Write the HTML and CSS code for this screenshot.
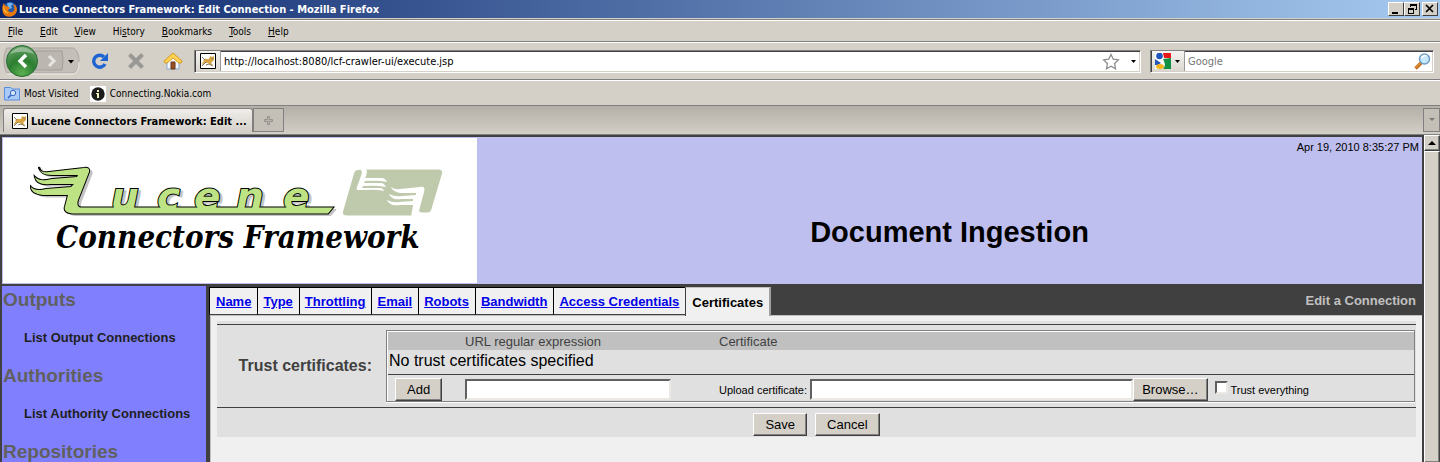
FILE: index.html
```html
<!DOCTYPE html>
<html lang="en">
<head>
<meta charset="utf-8">
<title>Lucene Connectors Framework: Edit Connection</title>
<link rel="stylesheet" href="styles.css">
</head>
<body>
<div class="window">
  <header class="titlebar">
    <svg class="icon16" viewBox="0 0 16 16" aria-hidden="true"><circle cx="8" cy="8" r="7" fill="#2458a8"/><path d="M5 3c2-2 5-1 6 0l-2 2 1 2-3 1z" fill="#6bb6ee"/><path d="M2 2c0 2 1 3 3 3l3 2-2 2c1 3 5 3 6 0 1-2 0-4-1-6 4 1 5 6 3 9-3 5-11 5-13 0C0 8 0 5 2 2z" fill="#e8780c"/><path d="M2 4c0 4 1 7 5 8-4 1-7-3-5-8z" fill="#ffc83c"/></svg>
    <span class="window-title">Lucene Connectors Framework: Edit Connection - Mozilla Firefox</span>
    <div class="window-buttons">
      <button class="win-btn" aria-label="Minimize"><svg viewBox="0 0 12 10"><path d="M2 8h6v2H2z"/></svg></button>
      <button class="win-btn" aria-label="Restore"><svg viewBox="0 0 12 10" shape-rendering="crispEdges"><path d="M4 0h7v6H9V5h1V2H5v1H4zM2 4h6v6H2zm1 2v3h4V6z" fill-rule="evenodd"/></svg></button>
      <button class="win-btn win-close" aria-label="Close"><svg viewBox="0 0 12 10"><path d="M2 1l7 7M9 1L2 8" stroke="#000" stroke-width="1.7"/></svg></button>
    </div>
  </header>
  <nav class="menubar">
    <button><u>F</u>ile</button><button><u>E</u>dit</button><button><u>V</u>iew</button><button>Hi<u>s</u>tory</button><button><u>B</u>ookmarks</button><button><u>T</u>ools</button><button><u>H</u>elp</button>
  </nav>
  <div class="navbar">
    <button class="plain history" aria-label="Back and forward">
      <svg width="78" height="34" viewBox="0 0 78 34">
        <defs><radialGradient id="back" cx=".5" cy=".9" r=".8"><stop offset="0" stop-color="#5cb050"/><stop offset=".55" stop-color="#2b7e30"/><stop offset="1" stop-color="#5f9c60"/></radialGradient></defs>
        <path d="M5 4h66c8 3 8 22 0 25H5C1 24 1 9 5 4z" fill="#c4c0b9" stroke="#aaa69f"/>
        <path d="M5 30h66c4-1 6-5 6-12" fill="none" stroke="#f1eee8"/>
        <path d="M33 7h27q2 9 0 19H33z" fill="#bbb7b0" stroke="#a19d97"/>
        <circle cx="20" cy="17" r="15.500" fill="url(#back)" stroke="#2a6c33"/>
        <path d="M8 10c6-9 18-9 24 0-8-3-16-3-24 0z" fill="#fff" opacity=".35"/>
        <path d="M24 11l-6 6 6 6" fill="none" stroke="#fff" stroke-width="3.500"/>
        <path d="M47 12l5 5-5 5" fill="none" stroke="#e6e4df" stroke-width="3"/>
        <path d="M66 16h6l-3 3.500z"/>
      </svg>
    </button>
    <button class="plain" aria-label="Reload"><svg width="18" height="18" viewBox="0 0 18 18"><path d="M14 12a6 6 0 1 1-1-7" fill="none" stroke="#1e63d2" stroke-width="3.400"/><path d="M17 1v8H9z" fill="#1e63d2"/></svg></button>
    <button class="plain" aria-label="Stop"><svg width="18" height="18" viewBox="0 0 18 18"><path d="M2.500 2.500l13 13m0-13l-13 13" stroke="#9a9894" stroke-width="4"/></svg></button>
    <button class="plain" aria-label="Home"><svg width="20" height="18" viewBox="0 0 20 18"><path d="M4 8v9h12V8l-6-5z" fill="#f3f7fc" stroke="#8ca8cc"/><path d="M8 10h4v7H8z" fill="#985126" stroke="#693617"/><path d="M10 1L1 9l1 2h2l6-5 6 5h2l1-2z" fill="#ffd254" stroke="#d6971b"/></svg></button>
    <div class="field location">
      <span class="site-icon"><svg class="icon16" viewBox="0 0 16 16"><use href="#cat"/></svg></span>
      <input aria-label="Address" value="http://localhost:8080/lcf-crawler-ui/execute.jsp">
      <button class="plain" aria-label="Bookmark this page"><svg width="18" height="17" viewBox="0 0 18 17"><path d="M9 1.500l2.300 4.700 5 .7-3.700 3.600.9 5.200L9 13.300l-4.500 2.400.9-5.200L1.700 6.900l5-.7z" fill="#fff" stroke="#8c8c8c" stroke-width="1.300"/></svg></button>
      <button class="plain drop" aria-label="Show history"><svg width="5" height="3" viewBox="0 0 5 3"><path d="M0 0h5L2.500 3z"/></svg></button>
    </div>
    <div class="field search">
      <button class="engine" aria-label="Choose search engine"><svg class="icon16" viewBox="0 0 16 16"><path d="M0 0h16v16H0z" fill="#fff"/><path d="M8 0h8v5H9z" fill="#e81818"/><path d="M8 6l8-1v11H8c3-3 2-6 0-10z" fill="#109040"/><path d="M0 6l6 4-3 2H0z" fill="#2456b8"/><circle cx="4.500" cy="3" r="3.300" fill="#1c56bc"/><ellipse cx="5" cy="13.500" rx="4" ry="2.500" fill="#f5b418"/></svg><svg width="5" height="3" viewBox="0 0 5 3"><path d="M0 0h5L2.500 3z"/></svg></button>
      <input aria-label="Search" placeholder="Google">
      <button class="plain" aria-label="Go"><svg width="17" height="17" viewBox="0 0 17 17"><path d="M1.500 15.500l6-6" stroke="#c06a18" stroke-width="3.400"/><path d="M1.500 15l5-5" stroke="#f4ad50"/><circle cx="10.500" cy="6" r="5" fill="#c7e8fc" stroke="#709cc4" stroke-width="1.500"/><path d="M7.500 5c1-2.500 4-3 5-2" stroke="#fff" stroke-width="1.500" fill="none"/></svg></button>
    </div>
  </div>
  <nav class="bookmarks">
    <a href="#"><svg class="icon16" viewBox="0 0 16 16"><path d="M.5 1.500h6l2 1.500h7v11H.5z" fill="#a9c9f7" stroke="#5c8cdc"/><circle cx="9" cy="7" r="2.700" fill="#d3e5fe" stroke="#3868c0"/><path d="M7 9L4 12" stroke="#3868c0" stroke-width="1.700"/></svg>Most Visited</a>
    <a href="#"><svg class="icon16" viewBox="0 0 16 16"><path d="M0 0h16v16H0z" fill="#fff"/><circle cx="8" cy="8" r="6.700" fill="#1b1b1b"/><path d="M7 4h2v2H7zm-1 3h3v5H7V8H6z" fill="#efefbf"/></svg>Connecting.Nokia.com</a>
  </nav>
  <div class="tabstrip">
    <button class="browser-tab"><svg class="icon16" viewBox="0 0 16 16"><g id="cat"><path d="M.5.5h15v15H.5z" fill="#fff" stroke="#000"/><path d="M3 7c2-2 4-1 6-1l1-3 2 1 2-1v4l-2 2-1 1 2 2h-3l-2-2-3 0-3 2c0-2 1-3 2-4z" fill="#d9a443"/><path d="M2 4l3 3m-3 6l4-4m0 3l3-1 4 2M11 5l2 1" stroke="#857a68" fill="none"/></g></svg><span>Lucene Connectors Framework: Edit ...</span></button>
    <button class="new-tab" aria-label="New tab"><svg width="9" height="9" viewBox="0 0 9 9"><path d="M3.500.5h2v3h3v2h-3v3h-2v-3h-3v-2h3z" fill="#b4b1ab" stroke="#96938e"/></svg></button>
    <button class="all-tabs" aria-label="List all tabs"><svg width="6" height="4" viewBox="0 0 6 4"><path d="M0 0h6L3 3z" fill="#777"/></svg></button>
  </div>
  <div class="viewport">
    <div class="page">
      <div class="banner">
        <div class="logo">
          <svg width="474" height="145" viewBox="3 138 474 145" role="img" aria-label="Lucene Connectors Framework">
            <defs>
              <g id="wordmark">
                <path d="M39 168c2 4 4 5 10 4l35-4q6-1 5 4L78 200q-2 7 3 7.500H333l-5 6H72q-9-1-7-7L68 195H43c-8-1-12-4-12-8 3 3 7 4 15 2l25-2 3-3H50c-9 1-14-2-15-7 4 4 8 4 17 2l25-2 1-2H52c-9 0-12-3-13-8z"/>
                <g class="script"><text y="210"><tspan x="111">u</tspan><tspan x="157">c</tspan><tspan x="194">e</tspan><tspan x="236">n</tspan><tspan x="283">e</tspan></text></g>
              </g>
            </defs>
            <use href="#wordmark" x="3" y="2" fill="#c4c4c4" stroke="#c4c4c4"/>
            <use href="#wordmark" fill="#000" stroke="#000" stroke-width="2"/>
            <use href="#wordmark" fill="#bde384"/>
            <path d="M356 170.500q4-1 6-1h76q5 0 4 4l-11 37q-1 2-3 2h-9l-8 3H347q-5 0-4-4l11-38q1-3 2-3z" fill="#bfcaad"/>
            <g fill="#fff"><path d="M358 168h8q2 5-1 10h17q3 0 5 4-9-2-22-1l-1 2h17q3 0 5 4-9-2-23-1l-1 2h18q3 0 4 3-8-2-17-1H357q-1-1 0-3l5-14q-1-4-4-6z"/><path d="M391 187q4 3 9 2l20-2q6-1 4 5l-5 19q1 2 4 2l-2 4h-10l2-12h-13c-8 1-11-1-13-5q6 3 12 2l14-1v-2h-12c-7 1-10-1-12-5q6 3 13 2l14-1v-2h-13c-6 0-10-2-12-6z"/></g>
            <text class="logo-caption" x="56" y="248">Connectors Framework</text>
          </svg>
        </div>
        <div class="banner-main">
          <time class="clock">Apr 19, 2010 8:35:27 PM</time>
          <h1>Document Ingestion</h1>
        </div>
      </div>
      <div class="body">
        <nav class="sidebar">
          <h2>Outputs</h2><a href="#">List Output Connections</a>
          <h2>Authorities</h2><a href="#">List Authority Connections</a>
          <h2>Repositories</h2>
        </nav>
        <main class="content">
          <div class="page-tabs">
            <a href="#">Name</a><a href="#">Type</a><a href="#">Throttling</a><a href="#">Email</a><a href="#">Robots</a><a href="#">Bandwidth</a><a href="#">Access Credentials</a><span class="current">Certificates</span>
            <strong class="caption">Edit a Connection</strong>
          </div>
          <form class="panel">
            <div class="sheet">
              <div class="setting">
                <strong class="setting-label">Trust certificates:</strong>
                <table class="certs">
                  <thead><tr><th class="col-action"></th><th class="col-url">URL regular expression</th><th>Certificate</th></tr></thead>
                  <tbody>
                    <tr><td colspan="3" class="empty">No trust certificates specified</td></tr>
                    <tr class="entry">
                      <td class="add"><button type="button" class="btn">Add</button></td>
                      <td><input class="text regexp" aria-label="URL regular expression"></td>
                      <td><div class="upload"><label for="cert">Upload certificate:</label><input class="text" id="cert"><button type="button" class="btn">Browse…</button><label class="trust"><input type="checkbox">Trust everything</label></div></td>
                    </tr>
                  </tbody>
                </table>
              </div>
              <div class="actions"><button type="button" class="btn">Save</button><button type="button" class="btn">Cancel</button></div>
            </div>
          </form>
        </main>
      </div>
    </div>
    <div class="scrollbar"><button aria-label="Scroll up"><svg width="8" height="4" viewBox="0 0 8 4"><path d="M0 4h8L4 0z"/></svg></button><div class="thumb"></div></div>
  </div>
</div>
</body>
</html>
```
FILE: styles.css
```css
* { box-sizing: border-box; }
body { margin: 0; font: 13px "Liberation Sans", Arial, sans-serif; color: #000; overflow: hidden; }
button, input { font: inherit; color: inherit; margin: 0; }
button { padding: 0; border: 0; background: none; }
svg { display: block; flex: none; }
.icon16 { width: 16px; height: 16px; }
.window { display: flex; flex-direction: column; height: 100vh; background: #d4d0c8; }

.titlebar, .menubar, .navbar, .bookmarks, .tabstrip { display: flex; align-items: center; flex: none; font-family: "DejaVu Sans Condensed", "DejaVu Sans", sans-serif; font-size: 11px; }
.titlebar { height: 18px; padding: 0 2px; background: linear-gradient(90deg, #0a246a, #a6caf0); color: #fff; }
.window-title { flex: 1; padding-left: 1px; font-weight: bold; white-space: nowrap; }
.window-buttons { display: flex; }
.win-btn { width: 16px; height: 14px; padding: 1px; background: #d4d0c8; border: 1px solid; border-color: #fff #404040 #404040 #fff; }
.win-btn svg { width: 12px; height: 10px; }
.win-close { margin-left: 2px; }

.menubar { height: 23px; margin-top: 1px; padding: 1px 8px 0; gap: 17px; border-top: 1px solid #808080; border-bottom: 1px solid #808080; box-shadow: inset 0 1px #fff; font-size: 10px; }
.navbar { height: 38px; padding: 0 6px 0 2px; border-top: 1px solid #fff; border-bottom: 1px solid #808080; }
.history { margin-right: 11px; }
.navbar > .plain + .plain { margin-right: 18px; }
.field { display: flex; align-items: center; height: 23px; background: #fff; border: 1px solid; border-color: #808080 #fff #fff #808080; box-shadow: inset 1px 1px #404040, inset -1px -1px #d4d0c8; }
.field input { flex: 1; min-width: 0; border: 0; background: none; outline: 0; padding: 0 3px; }
.field input::placeholder { color: #777; opacity: 1; }
.location { flex: 1; margin-right: 9px; padding-right: 4px; margin-left: -7px; }
.site-icon { padding: 2px 4px; background: linear-gradient(#f5f4f1, #dad7d0); border-right: 1px solid #999; margin: 1px 0 1px 1px; }
.drop { margin-left: 11px; }
.search { width: 284px; padding-right: 2px; }
.engine { display: flex; align-items: center; gap: 4px; height: 20px; padding: 0 4px 0 3px; margin-left: 1px; background: linear-gradient(#f5f4f1, #dad7d0); border-right: 1px solid #999; }

.bookmarks { height: 25px; padding: 1px 4px 0; gap: 11px; border-top: 1px solid #fff; font-size: 10px; }
.bookmarks a { display: flex; align-items: center; gap: 4px; color: #000; text-decoration: none; }
.tabstrip { align-items: flex-end; height: 30px; padding: 3px 0 2px 3px; border-top: 1px solid #808080; background: linear-gradient(#b4b0a8, #ccc8c0 80%, #d4d0c8); border-bottom: 1px solid #808080; }
.browser-tab, .new-tab, .all-tabs { display: flex; align-items: center; height: 24px; border: 1px solid #808080; border-bottom: 0; }
.browser-tab { width: 250px; gap: 3px; padding: 1px 0 0 8px; background: linear-gradient(#f0eeeb, #d4d0c8); border-radius: 3px 3px 0 0; font-weight: bold; font-size: 11px; white-space: nowrap; }
.new-tab, .all-tabs { justify-content: center; width: 31px; background: #c4c0b8; border-bottom: 1px solid #808080; }
.all-tabs { width: 17px; margin-left: auto; }

.viewport { display: flex; flex: 1; min-height: 0; }
.page { display: flex; flex-direction: column; flex: 1; min-width: 0; padding: 2px 2px 0; background: #404040; }
.banner { display: flex; flex: none; background: #bfbfef; padding: 1px 0 1px 1px; }
.logo { flex: none; background: #fff; }
.script { font: italic bold 39px "DejaVu Sans", sans-serif; }
.logo-caption { font: italic bold 31px "DejaVu Serif Condensed", "DejaVu Serif", serif; }
.banner-main { display: flex; flex: 1; flex-direction: column; }
.clock { align-self: flex-end; padding: 3px 3px 0 0; font-size: 11px; }
h1 { margin: auto 0 34px; font-size: 29px; line-height: 34px; text-align: center; }
.body { display: flex; flex: 1; min-height: 0; padding-top: 2px; overflow: hidden; }
.sidebar { flex: none; width: 204px; background: #8080ff; overflow: hidden; }
.sidebar h2 { margin: 0; padding: 2px 1px 0; color: #606060; font-size: 19px; line-height: 23px; }
.sidebar a { display: block; padding: 19px 22px 17px; color: #202020; font-weight: bold; line-height: 15px; text-decoration: none; white-space: nowrap; }
.content { display: flex; flex: 1; flex-direction: column; min-width: 0; padding-left: 3px; }
.page-tabs { display: flex; flex: none; padding-top: 1px; height: 29px; font-weight: bold; line-height: 27px; }
.page-tabs a, .current { padding: 0 6px; background: #f0f0f0; border: 1px solid #000; border-right-width: 0; border-bottom-color: #404040; white-space: nowrap; }
.page-tabs a { color: #0000e8; }
.page-tabs a:not(:first-child) { padding: 0 6px 0 5px; }
.current { position: relative; z-index: 1; height: 29px; border: 1px solid #c0c0c0; border-left-color: #404040; border-right: 2px solid #a0a0a0; border-bottom: 0; line-height: 29px; }
.caption { margin-left: auto; padding-right: 6px; color: #c0c0c0; }
.panel { flex: 1; padding: 5px 6px; margin-left: 1px; background: #f0f0f0; border-top: 1px solid #c0c0c0; border-left: 1px solid #c0c0c0; }
.sheet { padding-top: 3px; background: #e0e0e0; }
.setting { display: flex; align-items: center; padding: 5px 1px 5px 0; border-top: 1px solid #404040; }
.setting-label { flex: none; width: 169px; padding-right: 14px; color: #404040; font-size: 16px; text-align: right; }
.certs { flex: 1; border: 1px solid #808080; border-spacing: 0; box-shadow: 0 1px #fff, inset 1px 1px #fff; padding: 1px 0 0 1px; }
.certs th { height: 18px; padding: 2px 2px 0; background: #c0c0c0; color: #404040; font-weight: normal; line-height: 16px; text-align: left; }
.certs td { padding: 0 2px; }
.certs .col-action { width: 75px; }
.certs .col-url { width: 254px; }
.certs .empty { height: 25px; padding: 0 1px 3px; border-bottom: 1px solid #404040; font-size: 16px; line-height: 20px; }
.entry td { height: 26px; padding-top: 3px; }
.entry .add { padding-left: 7px; }
.btn { display: block; height: 23px; padding: 0 11px; background: #d4d0c8; border: 1px solid; border-color: #fff #404040 #404040 #fff; box-shadow: inset -1px -1px #808080; font-size: 13px; line-height: 20px; }
.text { height: 21px; padding: 1px 4px; background: #fff; border: 2px solid; border-color: #606060 #ece9e4 #ece9e4 #606060; border-radius: 0; outline: 0; }
.regexp { display: block; width: 206px; }
.upload { display: flex; align-items: center; font-size: 11px; }
.upload .text { flex: 1; margin-left: 3px; min-width: 0; }
.upload .btn { padding: 0 8px; }
.trust { display: flex; align-items: center; gap: 3px; margin-right: 103px; margin-left: 7px; }
.trust input { appearance: none; width: 13px; height: 13px; margin-bottom: 4px; background: #fff; border: 2px solid; border-color: #606060 #ece9e4 #ece9e4 #606060; }
.actions { display: flex; justify-content: center; gap: 8px; padding: 5px 0 1px; border-top: 1px solid #404040; }

.scrollbar { display: flex; flex-direction: column; flex: none; width: 16px; background: #ebe8e3; }
.scrollbar button { display: flex; align-items: center; justify-content: center; height: 16px; }
.scrollbar button, .thumb { background: #d4d0c8; border: 1px solid; border-color: #fff #404040 #404040 #fff; box-shadow: inset -1px -1px #808080; }
.thumb { flex: 1; border-bottom: 0; }
```
